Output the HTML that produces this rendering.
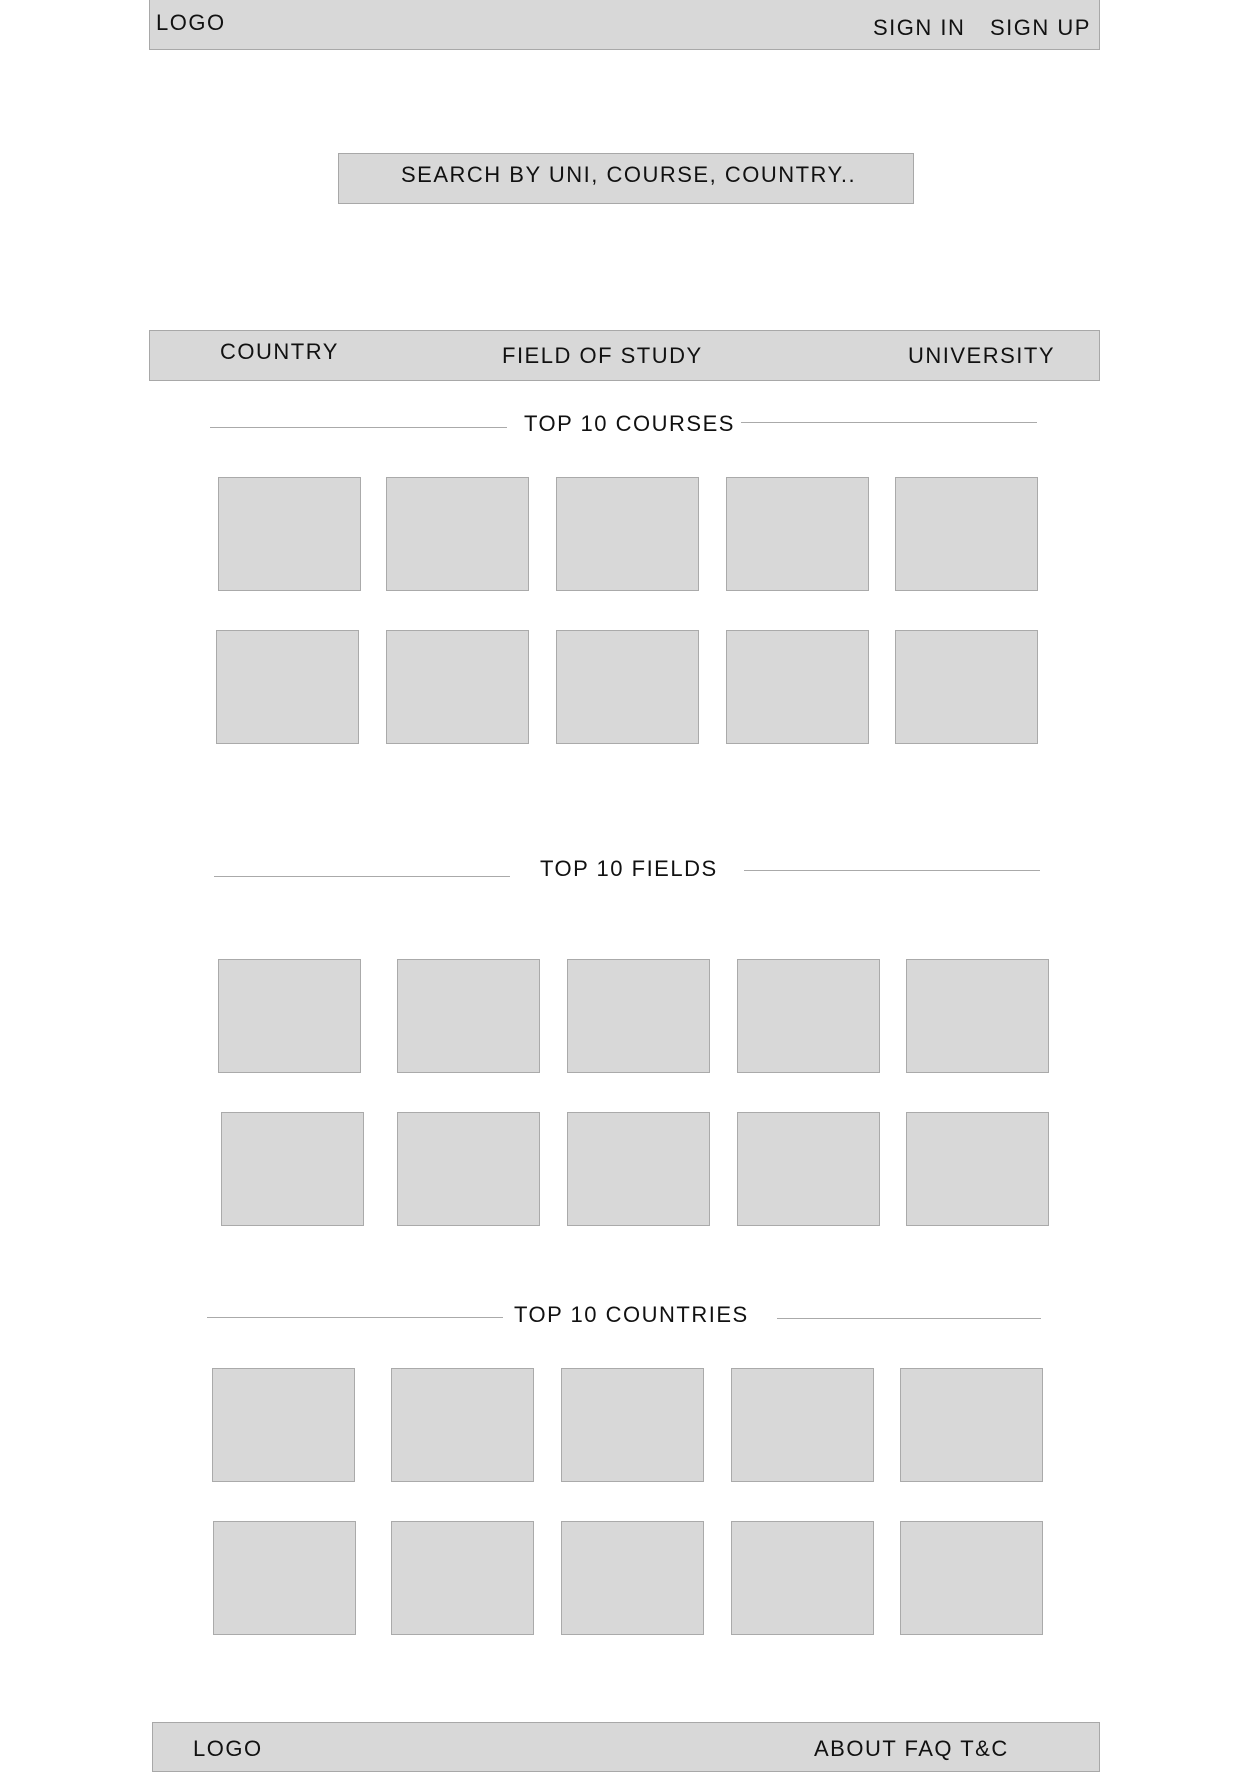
<!DOCTYPE html>
<html><head><meta charset="utf-8"><style>
body{margin:0;width:1239px;height:1754px;background:#fff;position:relative;overflow:hidden;font-family:"Liberation Sans",sans-serif;color:#111}
.bar{position:absolute;background:#d8d8d8;border:1px solid #a8a8a8;box-sizing:border-box}
.t{position:absolute;font-size:22px;letter-spacing:1.5px;white-space:nowrap;line-height:1}
.b{position:absolute;width:143px;height:114px;background:#d8d8d8;border:1px solid #aaa;box-sizing:border-box}
.l{position:absolute;height:1px;background:#aaa}
</style></head><body>
<div class="bar" style="left:149px;top:-1px;width:951px;height:51px"></div>
<div class="t" style="left:156px;top:12px">LOGO</div>
<div class="t" style="left:873px;top:17px">SIGN IN</div>
<div class="t" style="left:990px;top:17px">SIGN UP</div>

<div class="bar" style="left:338px;top:153px;width:576px;height:51px"></div>
<div class="t" style="left:401px;top:164px">SEARCH BY UNI, COURSE, COUNTRY..</div>

<div class="bar" style="left:149px;top:330px;width:951px;height:51px"></div>
<div class="t" style="left:220px;top:341px">COUNTRY</div>
<div class="t" style="left:502px;top:345px">FIELD OF STUDY</div>
<div class="t" style="left:908px;top:345px">UNIVERSITY</div>

<div class="l" style="left:210px;top:427px;width:297px"></div>
<div class="l" style="left:741px;top:422px;width:296px"></div>
<div class="t" style="left:524px;top:413px">TOP 10 COURSES</div>
<div class="b" style="left:218px;top:477px"></div><div class="b" style="left:386px;top:477px"></div><div class="b" style="left:556px;top:477px"></div><div class="b" style="left:726px;top:477px"></div><div class="b" style="left:895px;top:477px"></div>
<div class="b" style="left:216px;top:630px"></div><div class="b" style="left:386px;top:630px"></div><div class="b" style="left:556px;top:630px"></div><div class="b" style="left:726px;top:630px"></div><div class="b" style="left:895px;top:630px"></div>

<div class="l" style="left:214px;top:876px;width:296px"></div>
<div class="l" style="left:744px;top:870px;width:296px"></div>
<div class="t" style="left:540px;top:858px">TOP 10 FIELDS</div>
<div class="b" style="left:218px;top:959px"></div><div class="b" style="left:397px;top:959px"></div><div class="b" style="left:567px;top:959px"></div><div class="b" style="left:737px;top:959px"></div><div class="b" style="left:906px;top:959px"></div>
<div class="b" style="left:221px;top:1112px"></div><div class="b" style="left:397px;top:1112px"></div><div class="b" style="left:567px;top:1112px"></div><div class="b" style="left:737px;top:1112px"></div><div class="b" style="left:906px;top:1112px"></div>

<div class="l" style="left:207px;top:1317px;width:296px"></div>
<div class="l" style="left:777px;top:1318px;width:264px"></div>
<div class="t" style="left:514px;top:1304px">TOP 10 COUNTRIES</div>
<div class="b" style="left:212px;top:1368px"></div><div class="b" style="left:391px;top:1368px"></div><div class="b" style="left:561px;top:1368px"></div><div class="b" style="left:731px;top:1368px"></div><div class="b" style="left:900px;top:1368px"></div>
<div class="b" style="left:213px;top:1521px"></div><div class="b" style="left:391px;top:1521px"></div><div class="b" style="left:561px;top:1521px"></div><div class="b" style="left:731px;top:1521px"></div><div class="b" style="left:900px;top:1521px"></div>

<div class="bar" style="left:152px;top:1722px;width:948px;height:50px"></div>
<div class="t" style="left:193px;top:1738px">LOGO</div>
<div class="t" style="left:814px;top:1738px">ABOUT FAQ T&amp;C</div>
</body></html>
